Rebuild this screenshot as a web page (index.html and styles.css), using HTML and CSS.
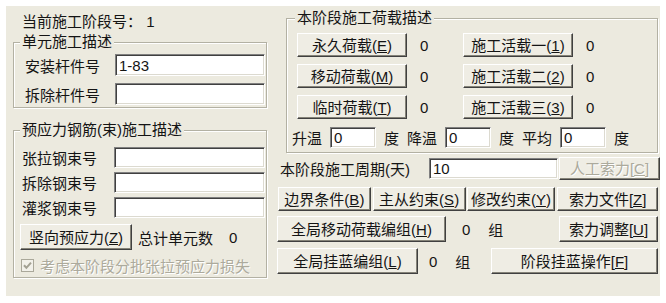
FILE: index.html
```html
<!DOCTYPE html>
<html lang="zh-CN">
<head>
    <meta charset="UTF-8">
    <title>施工阶段</title>
    <link rel="stylesheet" href="styles.css">
</head>
<body>
    <div class="panel">
        <div class="col-left">
            <div class="stage">当前施工阶段号：&nbsp;1</div>

            <fieldset class="group group-unit">
                <legend>单元施工描述</legend>
                <div class="form-grid">
                    <label>安装杆件号</label>
                    <input class="field" type="text" value="1-83">
                    <label>拆除杆件号</label>
                    <input class="field" type="text" value="">
                </div>
            </fieldset>

            <fieldset class="group group-tendon">
                <legend>预应力钢筋(束)施工描述</legend>
                <div class="form-grid tendon-grid">
                    <label>张拉钢束号</label>
                    <input class="field" type="text" value="">
                    <label>拆除钢束号</label>
                    <input class="field" type="text" value="">
                    <label>灌浆钢束号</label>
                    <input class="field" type="text" value="">
                </div>
                <div class="prestress-row">
                    <button class="btn btn-vertical">竖向预应力(<u>Z</u>)</button>
                    <span class="total-label">总计单元数</span>
                    <span class="total-value">0</span>
                </div>
                <div class="check-row">
                    <svg class="check" width="13" height="13" viewBox="0 0 13 13">
                        <rect x="0.5" y="0.5" width="12" height="12" fill="#f2f1ea" stroke="#aaa89a"/>
                        <path d="M3 6.2 L5.4 8.8 L10 3.6" stroke="#a3a193" stroke-width="2" fill="none"/>
                    </svg>
                    <span class="disabled-text">考虑本阶段分批张拉预应力损失</span>
                </div>
            </fieldset>
        </div>

        <div class="col-right">
            <fieldset class="group group-load">
                <legend>本阶段施工荷载描述</legend>
                <div class="load-grid">
                    <div class="load-item"><button class="btn btn-load">永久荷载(<u>E</u>)</button><span class="count">0</span></div>
                    <div class="load-item"><button class="btn btn-load">施工活载一(<u>1</u>)</button><span class="count">0</span></div>
                    <div class="load-item"><button class="btn btn-load">移动荷载(<u>M</u>)</button><span class="count">0</span></div>
                    <div class="load-item"><button class="btn btn-load">施工活载二(<u>2</u>)</button><span class="count">0</span></div>
                    <div class="load-item"><button class="btn btn-load">临时荷载(<u>T</u>)</button><span class="count">0</span></div>
                    <div class="load-item"><button class="btn btn-load">施工活载三(<u>3</u>)</button><span class="count">0</span></div>
                </div>
                <div class="temp-row">
                    <span>升温</span>
                    <input class="field field-temp" type="text" value="0">
                    <span>度</span>
                    <span>降温</span>
                    <input class="field field-temp" type="text" value="0">
                    <span>度</span>
                    <span>平均</span>
                    <input class="field field-temp" type="text" value="0">
                    <span>度</span>
                </div>
            </fieldset>

            <div class="period-row">
                <span class="period-label">本阶段施工周期(天)</span>
                <input class="field field-period" type="text" value="10">
                <button class="btn btn-cable" disabled>人工索力[<u>C</u>]</button>
            </div>

            <div class="btn-row row-constraint">
                <button class="btn w-bound">边界条件(<u>B</u>)</button>
                <button class="btn w-master">主从约束(<u>S</u>)</button>
                <button class="btn w-modify">修改约束(<u>Y</u>)</button>
                <button class="btn w-file">索力文件[<u>Z</u>]</button>
            </div>

            <div class="btn-row row-moving">
                <button class="btn w-moving">全局移动荷载编组(<u>H</u>)</button>
                <span class="group-count">0</span>
                <span class="group-unit-text">组</span>
                <button class="btn w-adjust">索力调整[<u>U</u>]</button>
            </div>

            <div class="btn-row row-basket">
                <button class="btn w-basket">全局挂蓝编组(<u>L</u>)</button>
                <span class="group-count basket-count">0</span>
                <span class="group-unit-text">组</span>
                <button class="btn w-basket-op">阶段挂蓝操作[<u>F</u>]</button>
            </div>
        </div>
    </div>
</body>
</html>
```

FILE: styles.css
```css
body {
    margin: 0;
    background: #fff;
    font-family: "Liberation Sans", "Noto Sans CJK SC", sans-serif;
    font-size: 15px;
    color: #141414;
}
.panel {
    margin: 6px 0 0 6px;
    width: 654px;
    height: 290px;
    background: #eceadf;
    display: flex;
}
.col-left {
    width: 256px;
    padding: 7px 0 0 6px;
}
.col-right {
    width: 381px;
    margin-left: 9px;
    padding-top: 3px;
}
.stage {
    height: 18px;
    line-height: 18px;
    padding-left: 10px;
}

/* group boxes */
.group {
    margin: 0;
    padding: 0;
    min-width: 0;
    box-sizing: border-box;
    border: 1px solid #b3b1a3;
    box-shadow: inset 1px 1px 0 #fff, 1px 1px 0 #fff;
}
.group legend {
    padding: 0 2px;
    margin-left: 6px;
    line-height: 18px;
    background: #eceadf;
}
.group-unit {
    margin: 2px 0 0 1px;
    width: 254px;
}
.group-tendon {
    margin: 13px 0 0 1px;
    width: 254px;
}
.group-load {
    width: 372px;
    margin-left: 9px;
}
.group-load legend {
    margin-left: 8px;
}

/* left forms */
.form-grid {
    display: grid;
    grid-template-columns: 90px 150px;
    grid-auto-rows: 22px;
    row-gap: 7px;
    align-items: center;
    padding: 3px 0 2px 11px;
}
.tendon-grid {
    grid-template-columns: 92px 151px;
    grid-auto-rows: 21px;
    row-gap: 4px;
    padding: 8px 0 0 8px;
}
.field {
    height: 100%;
    width: 100%;
    box-sizing: border-box;
    margin: 0;
    padding: 0 3px;
    font: inherit;
    color: #141414;
    background: #fff;
    border-style: solid;
    border-width: 1px;
    border-color: #808080 #fff #fff #808080;
    box-shadow: inset 1px 1px 0 #404040, inset -1px -1px 0 #dcdad0;
    outline: none;
}
.prestress-row {
    display: flex;
    align-items: center;
    margin-top: 6px;
    padding-left: 6px;
}
.total-label {
    margin-left: 6px;
}
.total-value {
    margin-left: 16px;
}
.check-row {
    display: flex;
    align-items: center;
    height: 15px;
    margin-top: 8px;
    padding: 0 0 4px 7px;
}
.check {
    display: block;
    margin-right: 6px;
}
.disabled-text {
    color: #acaa9c;
    text-shadow: 1px 1px 0 #fff;
}

/* buttons */
.btn {
    height: 24px;
    padding: 0;
    margin: 0;
    font: inherit;
    line-height: 1;
    color: #141414;
    background: #efede4;
    border: 1px solid;
    border-color: #fff #404040 #404040 #fff;
    box-shadow: inset -1px -1px 0 #858378;
    white-space: nowrap;
}
.btn[disabled] {
    color: #acaa9c;
    text-shadow: 1px 1px 0 #fff;
}
.btn-vertical {
    width: 112px;
    height: 26px;
}

/* load group */
.load-grid {
    display: grid;
    grid-template-columns: 166px 1fr;
    grid-auto-rows: 24px;
    row-gap: 7px;
    padding: 6px 0 0 10px;
}
.load-item {
    display: flex;
    align-items: center;
}
.btn-load {
    width: 110px;
}
.count {
    margin-left: 13px;
}
.temp-row {
    display: flex;
    align-items: center;
    gap: 8px;
    height: 21px;
    margin-top: 8px;
    padding: 0 0 4px 5px;
}
.field-temp {
    width: 46px;
}

/* lower rows */
.period-row {
    display: grid;
    grid-template-columns: 148px 129px 101px;
    column-gap: 1px;
    align-items: center;
    height: 23px;
    margin-top: 4px;
    padding-left: 3px;
}
.field-period {
    height: 21px;
}
.btn-cable {
    height: 23px;
}
.btn-row {
    display: flex;
    align-items: center;
}
.row-constraint {
    margin-top: 7px;
    padding-left: 1px;
}
.row-constraint .btn {
    height: 24px;
}
.w-bound { width: 93px; margin-right: 2px; }
.w-master { width: 93px; margin-right: 1px; }
.w-modify { width: 89px; margin-right: 2px; }
.w-file { width: 101px; }

.row-moving {
    margin-top: 5px;
}
.row-moving .btn,
.row-basket .btn {
    height: 26px;
}
.w-moving { width: 169px; }
.group-count {
    margin-left: 16px;
}
.group-unit-text {
    margin-left: 18px;
}
.w-adjust {
    width: 99px;
    margin-left: auto;
}
.row-basket {
    margin-top: 6px;
}
.w-basket { width: 141px; }
.basket-count {
    margin-left: 11px;
}
.w-basket-op {
    width: 167px;
    margin-left: auto;
}
```
